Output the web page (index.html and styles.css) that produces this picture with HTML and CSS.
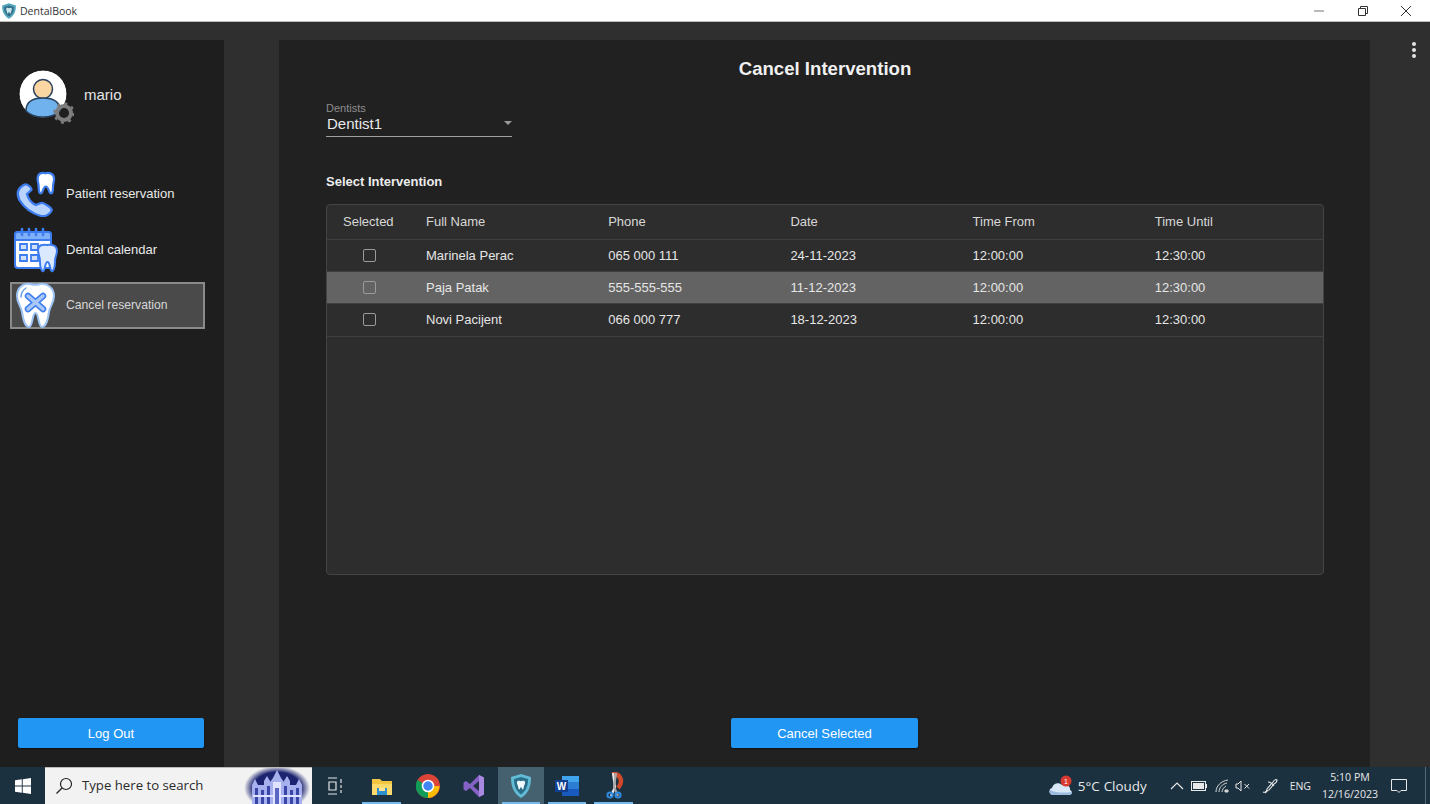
FILE: index.html
```html
<!DOCTYPE html>
<html lang="en">
<head>
    <meta charset="UTF-8">
    <meta name="viewport" content="width=device-width, initial-scale=1.0">
    <title>DentalBook</title>
    <link rel="stylesheet" href="styles.css">
</head>
<body>

    <!-- window title bar -->
    <header class="titlebar">
        <svg class="app-logo" viewBox="0 0 16 16" width="16" height="16">
            <path d="M8 .3 14.800 2.400C15.200 8 13 12.800 8 15.800 3 12.800 .8 8 1.200 2.400Z" fill="#56a6bd"/>
            <path d="M8 2.600 12.900 3.900C13 8 11.600 11.200 8 13.400 4.400 11.200 3 8 3.100 3.900Z" fill="#2f6f8a"/>
            <path d="M5.500 5C6.800 4.600 7.200 5.200 8 5.200S9.200 4.600 10.500 5C11.300 6.500 10.500 7.500 10.100 8.700 9.800 10.500 9.400 11 9 10.500L8 8.800 7 10.500C6.600 11 6.200 10.500 5.900 8.700 5.500 7.500 4.700 6.500 5.500 5Z" fill="#cfe6ee"/>
        </svg>
        <span class="app-name">DentalBook</span>
        <div class="window-controls">
            <svg viewBox="0 0 12 12" width="12" height="12"><path d="M1 6H11" stroke="#777" stroke-width="1"/></svg>
            <svg viewBox="0 0 12 12" width="12" height="12" fill="none" stroke="#333"><path d="M1.500 3.500H8.500V10.500H1.500Z"/><path d="M3.500 3.500V1.500H10.500V8.500H8.500"/></svg>
            <svg viewBox="0 0 12 12" width="12" height="12"><path d="M1 1 11 11M11 1 1 11" stroke="#333" stroke-width="1"/></svg>
        </div>
    </header>

    <div class="shell">
        <aside class="sidebar">
            <div class="user">
                <div class="avatar">
                    <svg viewBox="0 0 56 56" width="56" height="56">
                        <circle cx="25" cy="25" r="24" fill="#fff" stroke="#111" stroke-width="1"/>
                        <circle cx="25" cy="20" r="9.500" fill="#fbd5a2" stroke="#28405c" stroke-width="1.500"/>
                        <path d="M8 42C8 33 15 29 25 29S42 33 42 42C37 47 31 48 25 48S13 47 8 42Z" fill="#6fb2ee" stroke="#28405c" stroke-width="1.500"/>
                        <circle cx="46" cy="44" r="7" fill="none" stroke="#7c7c7c" stroke-width="4"/>
                        <circle cx="46" cy="44" r="9.500" fill="none" stroke="#7c7c7c" stroke-width="2.500" stroke-dasharray="3 4.460"/>
                    </svg>
                </div>
                <span class="user-name">mario</span>
            </div>

            <nav class="nav">
                <a class="nav-item">
                    <svg class="nav-icon" viewBox="0 0 44 46" width="44" height="46">
                        <path transform="translate(0 1) scale(1.080 1)" d="M9 13C4 16 2 21 5 28 9 35 15 41 25 44 29 45 34 42 35 38 35 36 27 30 25 31L20 33C16 31 13 26 12 22L16 18C17 16 12 11 9 13Z" fill="#b8d4ff" stroke="#3d7df0" stroke-width="2.200"/>
                        <path transform="translate(-5 -1) scale(1.100 1.100)" d="M26 8C26 3 30 2 33 3 36 2 41 3 41 8 41 11 40 12 40 16 40 20 39 22 37.500 21 36 20 36 15 33.500 15 31 15 31 20 29.500 21 28 22 27 20 27 16 27 12 26 11 26 8Z" fill="#fff" stroke="#3d7df0" stroke-width="2"/>
                    </svg>
                    <span>Patient reservation</span>
                </a>
                <a class="nav-item">
                    <svg class="nav-icon" viewBox="0 0 44 46" width="44" height="46">
                        <rect x="1" y="5" width="36" height="36" rx="3" fill="#fff" stroke="#3d7df0" stroke-width="2"/>
                        <path d="M1 8Q1 5 4 5H34Q37 5 37 8V13H1Z" fill="#7fb0f8" stroke="#3d7df0" stroke-width="2"/>
                        <path d="M8 2V8M15 2V8M22 2V8M29 2V8" stroke="#3d7df0" stroke-width="2.600" stroke-linecap="round"/>
                        <path d="M6 17H13V23H6ZM17 17H24V23H17ZM6 28H13V34H6ZM17 28H24V34H17Z" fill="#cfe0fb" stroke="#3d7df0" stroke-width="1.800"/>
                        <path d="M24 23C24 18 29 17 33 18 37 17 43 18 43 24 43 28 41 29 41 35 41 41 39 45 37.500 44 36 43 36 35 33.500 35 31 35 31 43 29.500 44 28 45 26 41 26 35 26 29 24 28 24 23Z" fill="#dbe9ff" stroke="#3d7df0" stroke-width="2"/>
                    </svg>
                    <span>Dental calendar</span>
                </a>
                <a class="nav-item is-active">
                    <svg class="nav-icon" viewBox="0 0 44 46" width="44" height="46">
                        <path d="M1 13C1 4 8 0 14 1 17 2 21 2 24 1 30 0 38 4 38 13 38 20 34 23 33 29 32 36 30 44 26 44 22 44 23 30 19.500 30 16 30 17 44 13 44 9 44 7 36 6 29 5 23 1 20 1 13Z" fill="#fff" stroke="#9cc3f5" stroke-width="2"/>
                        <path d="M12 13 27 26M27 13 12 26" stroke="#3d7df0" stroke-width="6.500" stroke-linecap="round"/>
                        <path d="M12 13 27 26M27 13 12 26" stroke="#a9c8f8" stroke-width="3.500" stroke-linecap="round"/>
                        <path d="M5 14C5 9 7 7 10 5" fill="none" stroke="#6a9fe8" stroke-width="1.500" stroke-linecap="round"/>
                    </svg>
                    <span>Cancel reservation</span>
                </a>
            </nav>

            <button class="btn btn-logout" type="button">Log Out</button>
        </aside>

        <main class="content">
            <h1>Cancel Intervention</h1>

            <div class="dentist-select">
                <label>Dentists</label>
                <div class="select-value">
                    <span>Dentist1</span>
                    <i class="caret"></i>
                </div>
            </div>

            <h2>Select Intervention</h2>

            <div class="table-card">
                <table>
                    <thead>
                        <tr>
                            <th class="col-check">Selected</th>
                            <th class="col-name">Full Name</th>
                            <th class="col-std">Phone</th>
                            <th class="col-std">Date</th>
                            <th class="col-std">Time From</th>
                            <th>Time Until</th>
                        </tr>
                    </thead>
                    <tbody>
                        <tr>
                            <td class="cell-check"><i class="checkbox"></i></td>
                            <td>Marinela Perac</td>
                            <td>065 000 111</td>
                            <td>24-11-2023</td>
                            <td>12:00:00</td>
                            <td>12:30:00</td>
                        </tr>
                        <tr class="is-hover">
                            <td class="cell-check"><i class="checkbox"></i></td>
                            <td>Paja Patak</td>
                            <td>555-555-555</td>
                            <td>11-12-2023</td>
                            <td>12:00:00</td>
                            <td>12:30:00</td>
                        </tr>
                        <tr>
                            <td class="cell-check"><i class="checkbox"></i></td>
                            <td>Novi Pacijent</td>
                            <td>066 000 777</td>
                            <td>18-12-2023</td>
                            <td>12:00:00</td>
                            <td>12:30:00</td>
                        </tr>
                    </tbody>
                </table>
            </div>

            <button class="btn btn-cancel" type="button">Cancel Selected</button>
        </main>

        <div class="rail">
            <i></i><i></i><i></i>
        </div>
    </div>

    <!-- windows taskbar -->
    <footer class="taskbar">
        <div class="task-start">
            <svg viewBox="0 0 16 16" width="16" height="16"><path d="M0 2.300 6.800 1.300V7.600H0ZM7.700 1.200 16 0V7.600H7.700ZM0 8.400H6.800V14.700L0 13.700ZM7.700 8.400H16V16L7.700 14.800Z" fill="#fff"/></svg>
        </div>
        <div class="task-search">
            <svg viewBox="0 0 18 18" width="18" height="18" fill="none" stroke="#222" stroke-width="1.200"><circle cx="11" cy="7" r="5.500"/><path d="M7 11 1.500 16.500"/></svg>
            <span>Type here to search</span>
            <svg class="search-art" viewBox="0 0 66 36" width="66" height="36">
                <defs>
                    <radialGradient id="artGlow">
                        <stop offset="72%" stop-color="#1c2470"/>
                        <stop offset="100%" stop-color="#1c2470" stop-opacity="0"/>
                    </radialGradient>
                </defs>
                <ellipse cx="33" cy="20" rx="33" ry="22" fill="url(#artGlow)"/>
                <path d="M8 36V17L11 11 14 17H20V13L23 8 26 13V14L29 10 33 2 37 10 40 14V13L43 8 46 13V17H52L55 11 58 17V36Z" fill="#a7b0ee"/>
                <path d="M11 20H14V36H11ZM17 22H20V36H17ZM23 18H26V36H23ZM40 18H43V36H40ZM46 22H49V36H46ZM52 20H55V36H52Z" fill="#3a45a8"/>
                <path d="M9 27H57V29H9Z" fill="#dfe3ff"/>
                <path d="M29 14H37V36H29Z" fill="#dfe3ff"/>
                <path d="M31 20H35V36H31Z" fill="#5a66c4"/>
            </svg>
        </div>
        <div class="task-app task-view">
            <svg viewBox="0 0 18 18" width="18" height="18" fill="none" stroke="#e5e5e5" stroke-width="1.200"><path d="M2 1H11M2 17H11M3 5H10V13H3ZM15 2V6M15 8V11M15 13V16"/></svg>
        </div>
        <div class="task-app has-bar">
            <svg viewBox="0 0 22 22" width="22" height="22"><path d="M1 4H9L11 6H21V20H1Z" fill="#f4c542"/><path d="M1 9H21V20H1Z" fill="#fbd96b"/><path d="M6 13H16V20H6Z" fill="#2e8fd0"/><path d="M8 13H14V16H8Z" fill="#fbe39a"/></svg>
        </div>
        <div class="task-app">
            <svg viewBox="0 0 24 24" width="24" height="24"><circle cx="12" cy="12" r="12" fill="#db4437"/><path d="M12 12 1.500 6A12 12 0 0 0 12 24Z" fill="#0f9d58"/><path d="M12 12H23.500A12 12 0 0 1 12 24Z" fill="#fbbc05"/><circle cx="12" cy="12" r="5.500" fill="#4285f4" stroke="#fff" stroke-width="1.600"/></svg>
        </div>
        <div class="task-app">
            <svg viewBox="0 0 22 24" width="22" height="24"><path d="M16 1 21 3.500V20.500L16 23 7 14 3 17 .5 15.500V8.500L3 7 7 10Z" fill="#8661c5"/><path d="M16 7 10 12 16 17Z" fill="#1f3040"/><path d="M16 1 21 3.500V20.500L16 23Z" fill="#a888e0"/></svg>
        </div>
        <div class="task-app is-open has-bar">
            <svg viewBox="0 0 22 24" width="22" height="24"><path d="M11 0 21 3C21 12 19 19 11 24 3 19 1 12 1 3Z" fill="#63bcd6"/><path d="M11 3 18 5C18 12 16 17 11 20.500 6 17 4 12 4 5Z" fill="#2a6f8a"/><path d="M7.500 7C9.500 6.400 10 7.200 11 7.200S12.500 6.400 14.500 7C15.800 9 14.600 10.500 14 12 13.600 15 13 16 12.400 15.200L11 12.800 9.600 15.200C9 16 8.400 15 8 12 7.400 10.500 6.200 9 7.500 7Z" fill="#f0fafc"/></svg>
        </div>
        <div class="task-app has-bar">
            <svg viewBox="0 0 26 24" width="26" height="24"><path d="M8 2H25V22H8Z" fill="#2b7cd3"/><path d="M8 2H25V8H8Z" fill="#41a5ee"/><path d="M8 15H25V22H8Z" fill="#185abd"/><path d="M1 6H14V18H1Z" fill="#103f91"/><text class="word-w" x="7.500" y="15.500">W</text></svg>
        </div>
        <div class="task-app has-bar">
            <svg viewBox="0 0 22 28" width="22" height="28" fill="none"><path d="M9 2C17 1 21 9 15 16" stroke="#d0492a" stroke-width="4.500"/><path d="M10 1 12 15 8 24" stroke="#e8e8e8" stroke-width="2.200"/><path d="M13 1 11 15 15 24" stroke="#a8a8a8" stroke-width="2.200"/><circle cx="7" cy="23" r="2.600" stroke="#2f8ae0" stroke-width="2"/><circle cx="15" cy="23" r="2.600" stroke="#2f8ae0" stroke-width="2"/></svg>
        </div>

        <div class="tray">
            <div class="tray-weather">
                <svg viewBox="0 0 26 22" width="26" height="22"><path d="M5 20C1 20 0 14 4 13 5 8 11 7 14 10 19 9 23 12 22 15 25 16 24 20 21 20Z" fill="#d9e8f7"/><path d="M5 20C2 20 1 17 2 15 8 18 16 18 24 17 24 19 23 20 21 20Z" fill="#9dbbe0"/><circle cx="18" cy="6" r="5.500" fill="#d83a32"/><text class="badge-num" x="18" y="8.500">1</text></svg>
                <span>5°C</span>
                <span>Cloudy</span>
            </div>
            <svg class="tray-chevron" viewBox="0 0 14 10" width="14" height="10" fill="none" stroke="#e8e8e8" stroke-width="1.200"><path d="M1 8 7 2 13 8"/></svg>
            <svg class="tray-battery" viewBox="0 0 16 10" width="16" height="10"><rect x=".5" y=".5" width="14" height="9" fill="none" stroke="#e8e8e8"/><rect x="2" y="2" width="11" height="6" fill="#e8e8e8"/><rect x="15" y="3" width="1" height="4" fill="#e8e8e8"/></svg>
            <svg class="tray-wifi" viewBox="0 0 14 14" width="14" height="14" fill="none" stroke="#d8d8d8"><path d="M1 13C1 7 6 2 13 1M4 13C4 9 7 5 12 4M7 13C7 11 9 8 11 7"/><path d="M10 11H13V13H10Z" fill="#d8d8d8"/></svg>
            <svg class="tray-mute" viewBox="0 0 16 12" width="16" height="12" fill="none" stroke="#e8e8e8"><path d="M1 4H3L6 1V11L3 8H1Z"/><path d="M9.500 4 14 8.500M14 4 9.500 8.500"/></svg>
            <svg class="tray-pen" viewBox="0 0 16 16" width="16" height="16" fill="none" stroke="#e8e8e8" stroke-width="1.100"><path d="M1 14C3 15 5 13 5 11L11 4C12 2 14 1 15 2 15 4 14 5 12 6L7 12C5 12 5 14 3 15"/><path d="M6 4C8 4 10 5 12 8"/></svg>
            <span class="tray-lang">ENG</span>
            <div class="tray-clock">
                <span>5:10 PM</span>
                <span>12/16/2023</span>
            </div>
            <svg class="tray-notif" viewBox="0 0 16 16" width="16" height="16" fill="none" stroke="#e8e8e8"><path d="M.5 1.500H15.500V12.500H10L8 14.500 6 12.500H.5Z"/></svg>
            <i class="tray-desktop"></i>
        </div>
    </footer>

</body>
</html>
```

FILE: styles.css
```css
* {
    margin: 0;
    padding: 0;
    box-sizing: border-box;
}

body {
    font-family: 'Liberation Sans', Arial, sans-serif;
    width: 1430px;
    height: 804px;
    overflow: hidden;
    display: flex;
    flex-direction: column;
    background: #2d2d2d;
    color: #e6e6e6;
}

/* title bar */
.titlebar {
    height: 22px;
    flex: none;
    display: flex;
    align-items: center;
    padding-left: 1px;
    background: #fff;
    border-bottom: 1px solid #bdbdbd;
}

.app-logo {
    margin-right: 3px;
}

.app-name {
    font-family: 'Open Sans', sans-serif;
    font-size: 10.5px;
    color: #333;
}

.window-controls {
    margin-left: auto;
    display: flex;
    gap: 31.5px;
    padding-right: 18px;
}

/* main window */
.shell {
    flex: 1;
    min-height: 0;
    display: flex;
    padding-top: 18px;
    background: #2f2f2f;
}

.sidebar {
    width: 224px;
    flex: none;
    margin-right: 55px;
    display: flex;
    flex-direction: column;
    background: #1e1e1e;
}

.user {
    display: flex;
    align-items: center;
    height: 84px;
    padding: 29px 0 0 18px;
}

.avatar {
    width: 66px;
    height: 56px;
}

.user-name {
    font-size: 15px;
    color: #e4e4e4;
    margin-top: -4px;
}

.nav {
    display: flex;
    flex-direction: column;
    margin-top: 46px;
    padding-left: 10px;
}

.nav-item {
    width: 195px;
    height: 47px;
    margin-bottom: 9px;
    display: flex;
    align-items: center;
    font-size: 13px;
    color: #e8e8e8;
}

.nav-icon {
    flex: none;
    margin: 0 8px 0 4px;
}

.nav-item.is-active {
    margin-bottom: 0;
    background: #4a4a4a;
    border: 2px solid #8a8a8a;
    font-size: 12.2px;
    color: #d6d6d6;
}

.nav-item.is-active span {
    margin-top: -2px;
}

.nav-item.is-active .nav-icon {
    margin-right: 6px;
}

.btn {
    height: 30px;
    border: none;
    border-radius: 2px;
    background: #2196f3;
    color: #fff;
    font-family: inherit;
    font-size: 13px;
    box-shadow: 0 1px 2px rgba(0, 0, 0, 0.5);
}

.btn-logout {
    width: 186px;
    margin: auto 0 19px 18px;
}

/* content panel */
.content {
    width: 1091px;
    flex: none;
    display: flex;
    flex-direction: column;
    padding: 18px 46px 19px 47px;
    background: #212121;
}

h1 {
    font-size: 18.6px;
    line-height: 21px;
    text-align: center;
    color: #f0f0f0;
}

.dentist-select {
    width: 186px;
    margin-top: 15px;
}

.dentist-select label {
    display: block;
    font-size: 11px;
    line-height: 11px;
    margin-top: 9px;
    color: #8e8e8e;
}

.select-value {
    display: flex;
    align-items: center;
    justify-content: space-between;
    height: 23px;
    padding: 0 0 4px 1px;
    border-bottom: 1px solid #a0a0a0;
    font-size: 15px;
    color: #e8e8e8;
}

.caret {
    width: 0;
    height: 0;
    border-left: 4px solid transparent;
    border-right: 4px solid transparent;
    border-top: 4px solid #9a9a9a;
}

h2 {
    font-size: 13px;
    line-height: 15px;
    margin-top: 37px;
    color: #ededed;
}

.table-card {
    height: 371px;
    margin-top: 15px;
    border: 1px solid #444;
    border-radius: 4px;
    background: #2d2d2d;
    overflow: hidden;
}

table {
    width: 100%;
    border-collapse: collapse;
    table-layout: fixed;
    font-size: 13px;
}

th {
    height: 34px;
    padding: 0 0 0 16px;
    text-align: left;
    font-weight: normal;
    color: #d8d8d8;
    border-bottom: 1px solid #3f3f3f;
}

td {
    height: 32.4px;
    padding: 0 0 0 16px;
    color: #e6e6e6;
    border-bottom: 1px solid #3f3f3f;
}

.col-check {
    width: 83px;
}

.col-name,
.col-std {
    width: 182.2px;
}

.cell-check {
    padding-left: 36px;
}

.checkbox {
    display: block;
    width: 13px;
    height: 13px;
    border: 1.5px solid #9a9a9a;
    border-radius: 2px;
}

.is-hover td {
    background: #636363;
}

.btn-cancel {
    width: 187px;
    margin: auto 0 0 405px;
}

.rail {
    flex: 1;
    display: flex;
    flex-direction: column;
    align-items: flex-end;
    gap: 2px;
    padding: 2px 14px 0 0;
}

.rail i {
    width: 4px;
    height: 4px;
    border-radius: 50%;
    background: #e4e4e4;
}

/* taskbar */
.taskbar {
    height: 37px;
    flex: none;
    display: flex;
    align-items: center;
    background: #1b3140;
}

.task-start {
    width: 45px;
    display: flex;
    justify-content: center;
}

.task-search {
    width: 267px;
    height: 37px;
    display: flex;
    align-items: center;
    padding-left: 10px;
    background: #f2f2f2;
    border-top: 1px solid #bbb;
    font-family: 'Open Sans', sans-serif;
    font-size: 13.2px;
    color: #2a2a2a;
    overflow: hidden;
}

.task-search span {
    margin: -2px 0 0 9px;
}

.search-art {
    margin-left: auto;
    margin-right: 2px;
}

.task-app {
    position: relative;
    width: 46.4px;
    height: 37px;
    flex: none;
    display: flex;
    align-items: center;
    justify-content: center;
}

.task-app.is-open {
    background: #45606e;
}

.has-bar::after {
    content: "";
    position: absolute;
    left: 4px;
    right: 4px;
    bottom: 0;
    height: 2px;
    background: #76b9ed;
}

.word-w {
    font-family: 'Liberation Sans', sans-serif;
    font-size: 10px;
    font-weight: bold;
    fill: #fff;
    text-anchor: middle;
}

.tray {
    margin-left: auto;
    height: 37px;
    display: flex;
    align-items: center;
    color: #e8e8e8;
    font-family: 'Open Sans', sans-serif;
}

.tray-weather {
    display: flex;
    align-items: center;
    gap: 4px;
    font-size: 13.4px;
    margin-right: 23px;
}

.badge-num {
    font-family: 'Liberation Sans', sans-serif;
    font-size: 7px;
    fill: #fff;
    text-anchor: middle;
}

.tray-chevron {
    margin-right: 7px;
}

.tray-battery {
    margin-right: 8px;
}

.tray-wifi {
    margin-right: 6px;
}

.tray-mute {
    margin-right: 11px;
}

.tray-pen {
    margin-right: 12px;
}

.tray-lang {
    font-size: 10.5px;
    margin-right: 8px;
}

.tray-clock {
    display: flex;
    flex-direction: column;
    align-items: center;
    width: 62px;
    font-size: 10.6px;
    line-height: 17px;
}

.tray-notif {
    margin: 0 18px 0 10px;
}

.tray-desktop {
    width: 5px;
    height: 37px;
    border-left: 1px solid #5a6a75;
}
```
